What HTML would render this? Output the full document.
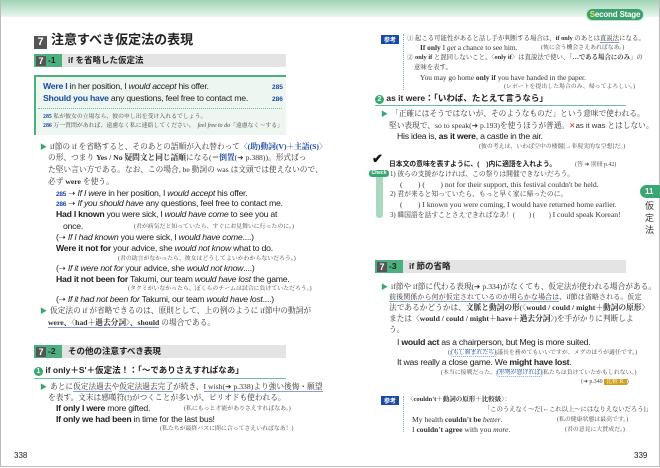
<!DOCTYPE html>
<html><head><meta charset="utf-8">
<style>
*{margin:0;padding:0;box-sizing:border-box}
body{width:660px;height:468px;position:relative;background:#fff;overflow:hidden;font-family:"Liberation Serif","Noto Serif CJK SC",serif;color:#333}
.l{position:absolute;white-space:nowrap;font-size:7.7px;line-height:11px}
.s{font-family:"Liberation Sans","Noto Sans CJK JP",sans-serif}
.e{font-family:"Liberation Sans","Noto Sans CJK JP",sans-serif;font-size:8.7px;letter-spacing:-0.25px;color:#222}
.j{font-size:5.9px;color:#444}
.b{font-weight:bold}
.bl{color:#1a4aa8;font-weight:bold}
.tri{color:#3aa672;font-size:7px;margin-right:3px}
.bar{position:absolute;height:13px;background:#e4e4e4}
.bar .n{position:absolute;left:0;top:0;height:13px;width:28px;background:#4caf7e}
.bar .n i{position:absolute;left:2px;top:1.5px;width:10px;height:10px;background:#555;color:#fff;font:bold 9px/10px "Liberation Sans",sans-serif;text-align:center;font-style:normal}
.bar .n b{position:absolute;left:14px;top:1px;color:#222;font:bold 8.5px/11px "Liberation Sans",sans-serif}
.bar .t{position:absolute;left:34px;top:0;font:bold 8.5px/13px "Liberation Sans","Noto Sans CJK JP",sans-serif;color:#222;white-space:nowrap}
.ul{border-bottom:1px solid #7fa3d6}
</style></head><body>
<div style="position:absolute;left:0;top:0;width:660px;height:17px;background:linear-gradient(#9fd4b6,#e9f6ef)"></div>
<div style="position:absolute;left:0;top:0;width:660px;height:467px;border:1px solid #bbb;border-top:none"></div>
<div style="position:absolute;left:586px;top:8px;width:58px;height:13px;border-radius:7px;background:#3c9f6e;border:1px solid #bfe3cf;color:#fff;font:bold 8px/11px 'Liberation Sans',sans-serif;text-align:center;white-space:nowrap;letter-spacing:-0.2px"><span style="color:#f3e35a">S</span>econd Stage</div>

<!-- LEFT PAGE -->
<div class="l s b" style="left:34px;top:32px;font-size:13px;line-height:16px;color:#222"><span style="display:inline-block;width:13px;height:13px;background:#555;color:#fff;text-align:center;font-size:11px;line-height:13px;margin-right:4px;vertical-align:-1px">7</span>注意すべき仮定法の表現</div>
<div class="bar" style="left:34px;top:54px;width:252px"><div class="n"><i>7</i><b>-1</b></div><div class="t">if を省略した仮定法</div></div>
<div style="position:absolute;left:34px;top:75px;width:252px;height:60px;background:#eef6f1;border-left:2px solid #4caf7e;border-top:2px solid #4caf7e"></div>
<div style="position:absolute;left:38px;top:108px;width:244px;border-top:1px dotted #6cbf94"></div>
<div class="l e" style="left:43px;top:81px"><span class="bl">Were I</span> in her position, I <i>would accept</i> his offer.</div>
<div class="l e" style="left:43px;top:93px"><span class="bl">Should you have</span> any questions, feel free to contact me.</div>
<div class="l s" style="left:272px;top:82px;font-size:6.5px;color:#1a4aa8;font-weight:bold">285</div>
<div class="l s" style="left:272px;top:94px;font-size:6.5px;color:#1a4aa8;font-weight:bold">286</div>
<div class="l j" style="left:43px;top:112px"><b style="color:#1a4aa8">285</b> 私が彼女の立場なら、彼の申し出を受け入れるでしょう。</div>
<div class="l j" style="left:43px;top:121px"><b style="color:#1a4aa8">286</b> 万一質問があれば、遠慮なく私に連絡してください。　<i>feel free to do</i>「遠慮なく～する」</div>

<div class="l" style="left:40px;top:141px"><span class="tri">▶</span>if節の if を省略すると、そのあとの語順が入れ替わって<b style="color:#1a4aa8">〈(助)動詞(V)＋主語(S)〉</b></div>
<div class="l" style="left:48px;top:152px">の形、つまり <b>Yes / No 疑問文と同じ語順</b>になる(＝<b style="color:#1a4aa8">倒置</b>(➜ p.388))。形式ばっ</div>
<div class="l" style="left:48px;top:164px">た堅い言い方である。なお、この場合, be 動詞の was は文頭では使えないので、</div>
<div class="l" style="left:48px;top:176px">必ず <b>were</b> を使う。</div>
<div class="l e" style="left:56px;top:188px"><b style="color:#1a4aa8;font-size:6.5px">285</b> ➝ <i>If I were</i> in her position, I <i>would accept</i> his offer.</div>
<div class="l e" style="left:56px;top:198px"><b style="color:#1a4aa8;font-size:6.5px">286</b> ➝ <i>If you should have</i> any questions, feel free to contact me.</div>
<div class="l e" style="left:56px;top:209px"><b>Had I known</b> you were sick, I <i>would have come</i> to see you at</div>
<div class="l e" style="left:63px;top:221px">once.</div>
<div class="l j" style="left:134px;top:222px">(君が病気だと知っていたら、すぐにお見舞いに行ったのに。)</div>
<div class="l e" style="left:56px;top:232px">(➝ <i>If I had known</i> you were sick, I <i>would have come</i>....)</div>
<div class="l e" style="left:56px;top:243px"><b>Were it not for</b> your advice, she <i>would not know</i> what to do.</div>
<div class="l j" style="left:118px;top:254px">(君の助言がなかったら、彼女はどうしてよいかわからないだろう。)</div>
<div class="l e" style="left:56px;top:263px">(➝ <i>If it were not for</i> your advice, she <i>would not know</i>....)</div>
<div class="l e" style="left:56px;top:274px"><b>Had it not been for</b> Takumi, our team <i>would have lost</i> the game.</div>
<div class="l j" style="left:128px;top:284px">(タクミがいなかったら、ぼくらのチームは試合に負けていただろう。)</div>
<div class="l e" style="left:56px;top:294px">(➝ <i>If it had not been for</i> Takumi, our team <i>would have lost</i>....)</div>
<div class="l" style="left:40px;top:305px"><span class="tri">▶</span>仮定法の if が省略できるのは、原則として、上の例のように if節中の動詞が</div>
<div class="l" style="left:48px;top:317px"><b class="ul">were、〈had＋過去分詞〉、should</b> の場合である。</div>

<div class="bar" style="left:34px;top:345px;width:252px"><div class="n"><i>7</i><b>-2</b></div><div class="t">その他の注意すべき表現</div></div>
<div class="l s b" style="left:34px;top:365px;font-size:8.5px;color:#222"><span style="display:inline-block;width:9px;height:9px;border-radius:50%;background:#3aa672;color:#fff;font-size:7px;line-height:9px;text-align:center">1</span> if only＋S'＋仮定法！：「～でありさえすればなあ」</div>
<div style="position:absolute;left:34px;top:378px;width:252px;border-top:1px solid #6cbf94"></div>
<div class="l" style="left:40px;top:381px"><span class="tri">▶</span>あとに<span class="ul">仮定法過去</span>や<span class="ul">仮定法過去完了</span>が続き、<span class="ul">I wish(➜ p.338)より強い後悔・願望</span></div>
<div class="l" style="left:48px;top:392px">を表す。文末は感嘆符(!)がつくことが多いが、ピリオドも使われる。</div>
<div class="l e" style="left:56px;top:403px"><b>If only I were</b> more gifted.</div>
<div class="l j" style="left:184px;top:404px">(私にもっと才能がありさえすればなあ。)</div>
<div class="l e" style="left:56px;top:414px"><b>If only we had been</b> in time for the last bus!</div>
<div class="l j" style="left:160px;top:424px">(私たちが最終バスに間に合ってさえいればなあ！)</div>
<div class="l s" style="left:14px;top:450px;font-size:8px;color:#222">338</div>

<!-- RIGHT PAGE -->
<div style="position:absolute;left:381px;top:35px;width:18px;height:9px;background:#1a4aa8;color:#fff;font:bold 6px/9px 'Noto Sans CJK JP',sans-serif;text-align:center">参考</div>
<div style="position:absolute;left:403px;top:34px;height:56px;border-left:1px dotted #7fa3d6"></div>
<div class="l" style="left:407px;top:33px;font-size:6.4px">① 起こる可能性があると話し手が判断する場合は、<b>if only</b> のあとは<span class="ul">直説法</span>になる。</div>
<div class="l" style="left:420px;top:42px;font-size:7.4px"><b>If only</b> I <i>get</i> a chance to see him.</div>
<div class="l j" style="left:541px;top:43px">(彼に会う機会さえあればなあ。)</div>
<div class="l" style="left:407px;top:52px;font-size:6.4px">② <b>only if</b> と混同しないこと。〈<b>only if</b>〉は直説法で使い、「<b>…である場合にのみ</b>」の</div>
<div class="l" style="left:414px;top:62px;font-size:6.4px">意味を表す。</div>
<div class="l" style="left:420px;top:72px;font-size:7.4px">You may go home <b>only if</b> you have handed in the paper.</div>
<div class="l j" style="left:504px;top:82px">(レポートを提出した場合のみ、帰ってよろしい。)</div>
<div class="l s b" style="left:375px;top:93px;font-size:8.5px;color:#222"><span style="display:inline-block;width:9px;height:9px;border-radius:50%;background:#3aa672;color:#fff;font-size:7px;line-height:9px;text-align:center">2</span> as it were：「いわば、たとえて言うなら」</div>
<div style="position:absolute;left:375px;top:105px;width:251px;border-top:1px solid #6cbf94"></div>
<div class="l" style="left:381px;top:108px"><span class="tri">▶</span>「正確にはそうではないが、そのようなものだ」という意味で使われる。</div>
<div class="l" style="left:389px;top:120px">堅い表現で、so to speak(➜ p.193)を使うほうが普通。<span style="color:#d22">✕</span><span class="s">as it was</span> とはしない。</div>
<div class="l e" style="left:397px;top:131px">His idea is, <b>as it were</b>, a castle in the air.</div>
<div class="l j" style="left:479px;top:142px">(彼の考えは、いわば空中の楼閣[→非現実的な空想]だ。)</div>

<div style="position:absolute;left:376px;top:170px;width:7px;height:48px;border-radius:3px;background:#a9d9bf"></div>
<div class="l s b" style="left:372px;top:153px;font-size:13px;color:#111">✔</div>
<div style="position:absolute;left:369px;top:170px;width:20px;height:7px;border-radius:3px;background:#3aa672;color:#fff;font:bold 5px/7px 'Liberation Sans',sans-serif;text-align:center">Check</div>
<div class="l s b" style="left:389px;top:159px;font-size:6.8px;color:#222">日本文の意味を表すように、(　)内に適語を入れよう。</div>
<div class="l j" style="left:575px;top:160px">(答 ➜ 別冊 p.42)</div>
<div class="l" style="left:390px;top:169px;font-size:6.8px">1) 彼らの支援がなければ、この祭りは開催できないだろう。</div>
<div class="l" style="left:400px;top:179px;font-size:7.7px">(　　) (　　) not for their support, this festival couldn't be held.</div>
<div class="l" style="left:390px;top:189px;font-size:6.8px">2) 君が来ると知っていたら、もっと早く家に帰ったのに。</div>
<div class="l" style="left:400px;top:199px;font-size:7.7px">(　　) I known you were coming, I would have returned home earlier.</div>
<div class="l" style="left:390px;top:209px;font-size:6.8px">3) 韓国語を話すことさえできればなあ！(　　) (　　) <span style="font-size:7.7px">I could speak Korean!</span></div>

<div style="position:absolute;left:640px;top:185px;width:20px;height:13px;border-radius:7px 0 0 7px;background:#3aa672;color:#fff;font:bold 8px/13px 'Liberation Sans',sans-serif;padding-left:5px">11</div>
<div class="l s" style="left:645px;top:200px;font-size:9px;line-height:12px;width:10px;white-space:normal;color:#333">仮定法</div>

<div class="bar" style="left:375px;top:260px;width:251px"><div class="n"><i>7</i><b>-3</b></div><div class="t">if 節の省略</div></div>
<div class="l" style="left:381px;top:281px"><span class="tri">▶</span>if節や if節に代わる表現(➜ p.334)がなくても、仮定法が使われる場合がある。</div>
<div class="l" style="left:389px;top:292px;font-size:7.1px"><span class="ul">前後関係から何が仮定されているのか明らかな場合は</span>、if節は省略される。仮定</div>
<div class="l" style="left:389px;top:302px">法であるかどうかは、<b>文脈と動詞の形</b>(〈<b>would / could / might＋動詞の原形</b>〉</div>
<div class="l" style="left:389px;top:313px">または〈<b>would / could / might＋have＋過去分詞</b>〉)を手がかりに判断しよ</div>
<div class="l" style="left:389px;top:324px">う。</div>
<div class="l e" style="left:397px;top:337px">I <b>would act</b> as a chairperson, but Meg is more suited.</div>
<div class="l j" style="left:448px;top:348px">(<span style="color:#1a4aa8;border:1px dotted #7fa3d6;border-radius:3px">(もし頼まれたら)</span>議長を務めてもいいですが、メグのほうが適任です。)</div>
<div class="l e" style="left:397px;top:357px">It was really a close game.  We <b>might have lost</b>.</div>
<div class="l j" style="left:441px;top:368px">(本当に接戦だった。<span style="color:#1a4aa8;border:1px dotted #7fa3d6;border-radius:3px">(形勢が悪ければ)</span>私たちは負けていたかもしれない。)</div>
<div class="l j" style="left:581px;top:377px">(➜ p.340 <span style="background:#d4a017;color:#fff;padding:0 2px">比較 R.</span>)</div>

<div style="position:absolute;left:381px;top:396px;width:18px;height:9px;background:#1a4aa8;color:#fff;font:bold 6px/9px 'Noto Sans CJK JP',sans-serif;text-align:center">参考</div>
<div style="position:absolute;left:403px;top:396px;height:36px;border-left:1px dotted #7fa3d6"></div>
<div class="l" style="left:407px;top:394px;font-size:6.5px">〈<b>couldn't＋動詞の原形＋比較級</b>〉：</div>
<div class="l" style="left:484px;top:404px;font-size:6.3px">「このうえなく～だ[←これ以上～にはなりえないだろう]」</div>
<div class="l" style="left:412px;top:414px;font-size:7.6px">My health <b>couldn't be</b> <i>better</i>.</div>
<div class="l j" style="left:557px;top:415px">(私の健康状態は最高です。)</div>
<div class="l" style="left:412px;top:424px;font-size:7.6px">I <b>couldn't agree</b> with you <i>more</i>.</div>
<div class="l j" style="left:565px;top:425px">(君の意見に大賛成だ。)</div>
<div class="l s" style="left:634px;top:450px;font-size:8px;color:#222">339</div>
</body></html>
